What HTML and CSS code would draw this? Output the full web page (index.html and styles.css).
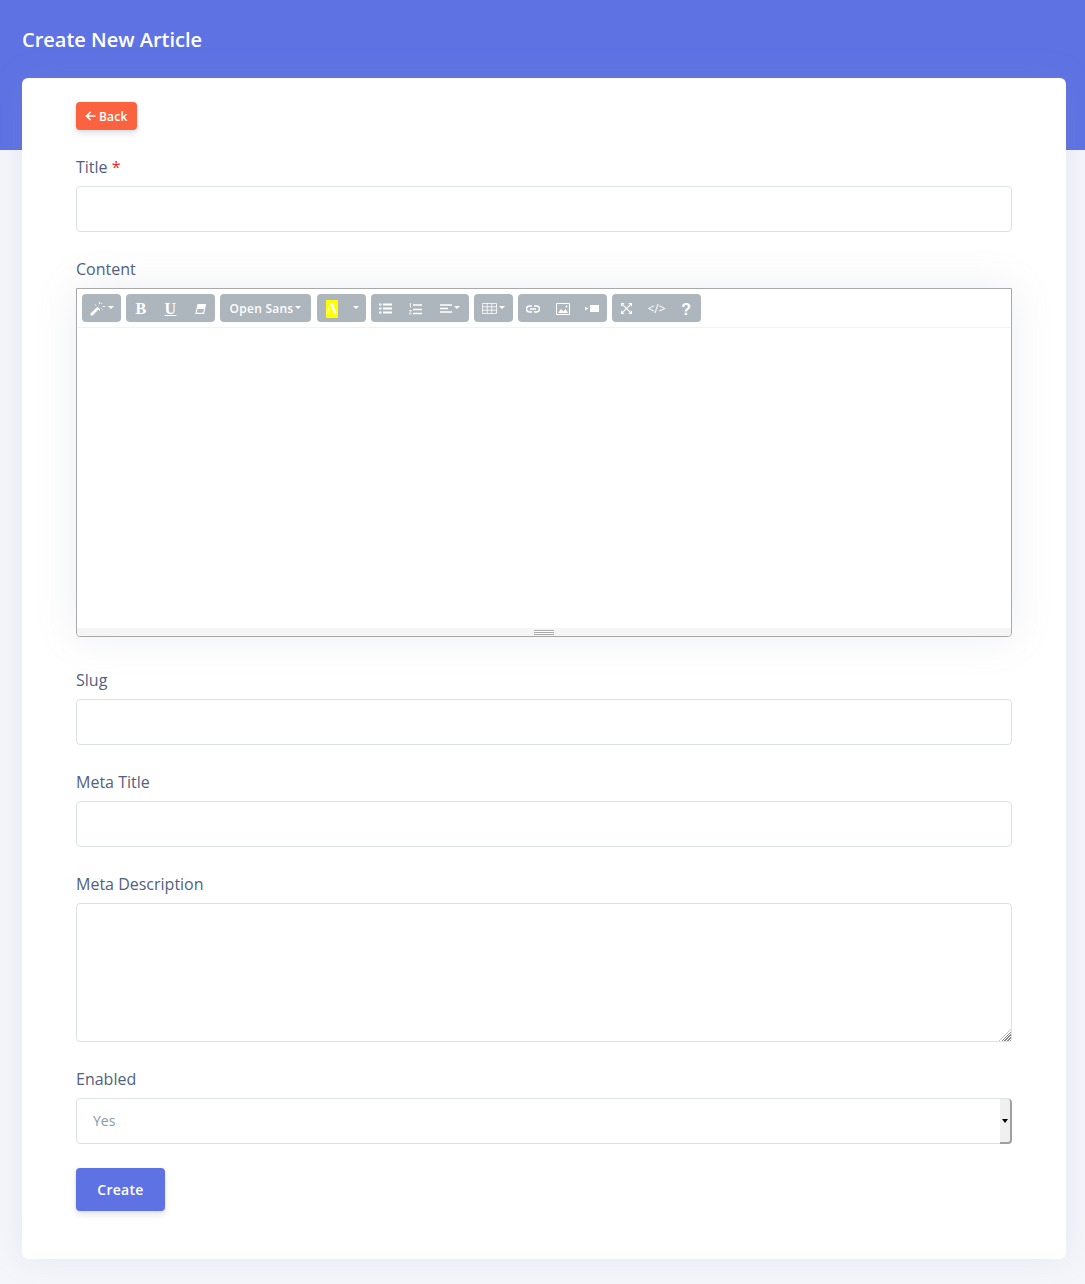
FILE: index.html
```html
<!DOCTYPE html>
<html lang="en">
<head>
<meta charset="utf-8">
<title>Create New Article</title>
<link rel="stylesheet" href="styles.css">
</head>
<body>
<header class="hero"><h1 class="hero-title">Create New Article</h1></header>
<main class="card">
  <a class="btn-back" href="#"><svg class="back-icon" viewBox="0 0 12 12"><path d="M10.5 6H2M5.6 2 1.600 6l4 4" fill="none" stroke="#fff" stroke-width="1.700"/></svg>Back</a>
  <form class="form">
    <div class="field first">
      <label class="label">Title <span class="req">*</span></label>
      <input class="control" type="text">
    </div>
    <div class="field">
      <label class="label">Content</label>
      <div class="editor">
        <div class="toolbar">
          <div class="tg g-style"><svg class="ic" width="16" height="15" viewBox="0 0 16 15"><path d="M0 13 7.500 5.800l2 1.800L2 15z" fill="#fff"/><path d="M9.500 1v2M9.500 8v1.500M5 3.500l1.200 1M12.500 5.500h2.500M12 2l-1 1M12.500 8.500l-1-1" stroke="#fff" stroke-width="1"/></svg><i class="caret"></i></div>
          <div class="tg g-font">
            <span class="tb"><b class="serif">B</b></span>
            <span class="tb"><b class="serif ul">U</b></span>
            <span class="tb"><svg width="11" height="10" viewBox="0 0 11 10"><path d="M3 .600h7.400L8.600 9.400H1z" fill="none" stroke="#fff" stroke-width="1.100"/><path d="M3 .600h7.400L9.500 5H2z" fill="#fff"/></svg></span>
          </div>
          <div class="tg g-name">Open Sans<i class="caret"></i></div>
          <div class="tg g-color"><span class="swatch">A</span><i class="caret"></i></div>
          <div class="tg g-para">
            <span class="tb"><svg width="13" height="11" viewBox="0 0 13 11"><path d="M0 1.500h2.500M4 1.500h9M0 5.500h2.500M4 5.500h9M0 9.500h2.500M4 9.500h9" stroke="#fff" stroke-width="1.800"/></svg></span>
            <span class="tb"><svg width="13" height="12" viewBox="0 0 13 12"><path d="M4 2h9M4 6.500h9M4 10.500h9" stroke="#fff" stroke-width="1.600"/><path d="M.5 1 1.500.5v4M0 7.500h2.500L.2 11h2.600" fill="none" stroke="#fff" stroke-width=".8"/></svg></span>
            <span class="tb wide"><svg width="12" height="9" viewBox="0 0 12 9"><path d="M0 1h12M0 4.500h8M0 8h12" stroke="#fff" stroke-width="1.600"/></svg><i class="caret"></i></span>
          </div>
          <div class="tg g-table"><svg width="15" height="11" viewBox="0 0 15 11"><path d="M.5.500h14v10H.5zM.5 3.800h14M.5 7.200h14M5.200.500v10M9.800.500v10" fill="none" stroke="#fff" stroke-width=".8"/></svg><i class="caret"></i></div>
          <div class="tg g-insert">
            <span class="tb"><svg width="14" height="8" viewBox="0 0 14 8"><path d="M6 1H3.500a3 3 0 0 0 0 6H6M8 1h2.500a3 3 0 0 1 0 6H8M4 4h6" fill="none" stroke="#fff" stroke-width="1.500"/></svg></span>
            <span class="tb"><svg width="14" height="12" viewBox="0 0 14 12"><path d="M.5.500h13v11H.5z" fill="none" stroke="#fff"/><path d="M2 10l3-4 2.500 2.500L9.500 6 12 10z" fill="#fff"/><circle cx="10.500" cy="3.500" r="1" fill="#fff"/></svg></span>
            <span class="tb"><svg width="14" height="7" viewBox="0 0 14 7"><path d="M5 0h9v7H5zM0 1.500 3.500 3.500 0 5.500z" fill="#fff"/></svg></span>
          </div>
          <div class="tg g-misc">
            <span class="tb"><svg width="11" height="11" viewBox="0 0 12 12"><path d="M2 2l8 8M10 2l-8 8" stroke="#fff" stroke-width="1.200"/><path d="M0 0h4L0 4zM12 0H8l4 4zM0 12h4L0 8zM12 12H8l4-4z" fill="#fff"/></svg></span>
            <span class="tb code">&lt;/&gt;</span>
            <span class="tb help">?</span>
          </div>
        </div>
        <div class="editable"></div>
        <div class="statusbar"><span class="grip"></span></div>
      </div>
    </div>
    <div class="field after-editor">
      <label class="label">Slug</label>
      <input class="control" type="text">
    </div>
    <div class="field">
      <label class="label">Meta Title</label>
      <input class="control" type="text">
    </div>
    <div class="field">
      <label class="label">Meta Description</label>
      <div class="area-wrap"><textarea class="control area"></textarea></div>
    </div>
    <div class="field tight">
      <label class="label">Enabled</label>
      <div class="select-wrap">
        <select class="control select"><option>Yes</option><option>No</option></select>
        <span class="select-arrow"></span>
      </div>
    </div>
    <button class="btn-create" type="button">Create</button>
  </form>
</main>
</body>
</html>
```
FILE: styles.css
```css
* { box-sizing: border-box; }
html, body { margin: 0; padding: 0; }
body {
  height: 1284px;
  overflow: hidden;
  background: #f5f6fc;
  font-family: "Open Sans", sans-serif;
  color: #525f7f;
}
.hero { height: 150px; background: #5e72e4; padding: 27px 22px 0; }
.hero-title {
  margin: 0;
  font-size: 20px;
  line-height: 26px;
  font-weight: 600;
  color: #fff;
}
.card {
  margin: -72px 19px 0 22px;
  height: 1181px;
  padding: 24px 54px;
  background: #fff;
  border-radius: 6px;
  box-shadow: 0 0 2rem rgba(136, 152, 170, .15);
  position: relative;
}
.btn-back {
  display: inline-flex;
  align-items: center;
  width: 61px;
  height: 28px;
  padding: 0 0 0 9px;
  background: #fb6340;
  color: #fff;
  border-radius: 4px;
  font-size: 12px;
  font-weight: 600;
  letter-spacing: .2px;
  text-decoration: none;
  box-shadow: 0 4px 6px rgba(50, 50, 93, .11), 0 1px 3px rgba(0, 0, 0, .08);
}
.back-icon { width: 12px; height: 12px; margin-right: 2px; }
.form { display: block; }
.field { margin-bottom: 25px; }
.field.first { margin-top: 25px; }
.field.tight { margin-bottom: 24px; }
.label {
  display: block;
  font-size: 16px;
  line-height: 24px;
  margin-bottom: 7px;
  color: #525f7f;
  font-weight: 400;
}
.req { color: #f5222d; }
.control {
  display: block;
  width: 100%;
  height: 46px;
  border: 1px solid #dee2e6;
  border-radius: 4px;
  background: #fff;
  padding: 10px 16px;
  font: 14px "Open Sans", sans-serif;
  color: #8898aa;
  outline: none;
}
.area { height: 139px; resize: none; }
.area-wrap { position: relative; }
.area-wrap::after {
  content: "";
  position: absolute;
  right: 1px;
  bottom: 1px;
  width: 12px;
  height: 12px;
  background: repeating-linear-gradient(135deg, #8c8c8c 0 1px, #fff 1px 2px);
  clip-path: polygon(100% 0, 100% 100%, 0 100%);
}
.select { appearance: none; -webkit-appearance: none; padding: 8px 16px 10px; }
.select-wrap { position: relative; }
.select-arrow {
  position: absolute;
  top: 1px;
  right: 0;
  bottom: 0;
  width: 12px;
  background: #f0f0f0;
  border-right: 2px solid #a0a0a0;
  border-bottom: 2px solid #a0a0a0;
  border-radius: 0 4px 4px 0;
}
.select-arrow::after {
  content: "";
  position: absolute;
  left: 2px;
  top: 20px;
  border-top: 4px solid #000;
  border-left: 3px solid transparent;
  border-right: 3px solid transparent;
}
.editor {
  height: 349px;
  border: 1px solid #a9a9a9;
  border-radius: 0 0 4px 4px;
  box-shadow: 0 0 40px rgba(136, 152, 170, .16);
  display: flex;
  flex-direction: column;
  background: #fff;
}
.toolbar {
  display: flex;
  height: 39px;
  padding: 5px 0 0 5px;
  gap: 5px;
  border-bottom: 1px solid #f2f2f2;
}
.tg {
  height: 28px;
  padding-top: 1px;
  display: flex;
  align-items: center;
  justify-content: center;
  background: #adb5bd;
  border-radius: 4px;
  color: #fff;
  font-size: 12px;
  font-weight: 600;
  letter-spacing: .25px;
  flex: none;
}
.g-style { width: 39px; }
.g-font { width: 89px; }
.g-name { width: 91px; }
.g-color { width: 49px; margin-left: 1px; justify-content: flex-start; padding-left: 9px; }
.g-para { width: 98px; }
.g-table { width: 39px; }
.g-insert { width: 89px; }
.g-misc { width: 89px; }
.tb { flex: 1 1 0; display: flex; align-items: center; justify-content: center; }
.tb.wide { flex: 1.3 1 0; }
.caret {
  display: inline-block;
  margin-left: 2px;
  margin-bottom: 2px;
  border-top: 3px solid #fff;
  border-left: 3px solid transparent;
  border-right: 3px solid transparent;
}
.serif { font-family: "Liberation Serif", serif; font-size: 16px; font-weight: 700; }
.ul { text-decoration: underline; }
.swatch {
  width: 12px;
  height: 18px;
  background: #ff0;
  color: #fff;
  font: 700 16px/18px "Liberation Serif", serif;
  text-align: center;
  margin-right: 12px;
}
.g-color .caret { margin-left: 3px; }
.code { font-size: 12px; font-weight: 400; letter-spacing: 0; }
.help { font: 700 16px/16px "Liberation Sans", sans-serif; padding-top: 2px; }
.editable { flex: 1; }
.statusbar {
  height: 8px;
  background: #f5f5f5;
  border-radius: 0 0 4px 4px;
  display: flex;
  justify-content: center;
  padding-top: 2px;
}
.grip {
  width: 20px;
  height: 5px;
  border-top: 1px solid #a9a9a9;
  border-bottom: 1px solid #a9a9a9;
  background: linear-gradient(#fff 0 1px, #a9a9a9 1px 2px, #fff 2px);
}
.after-editor { margin-top: 31px; }
.btn-create {
  display: block;
  width: 89px;
  height: 43px;
  border: 0;
  border-radius: 4px;
  background: #5e72e4;
  color: #fff;
  font: 600 14px "Open Sans", sans-serif;
  letter-spacing: .3px;
  box-shadow: 0 4px 6px rgba(50, 50, 93, .11), 0 1px 3px rgba(0, 0, 0, .08);
}
```
